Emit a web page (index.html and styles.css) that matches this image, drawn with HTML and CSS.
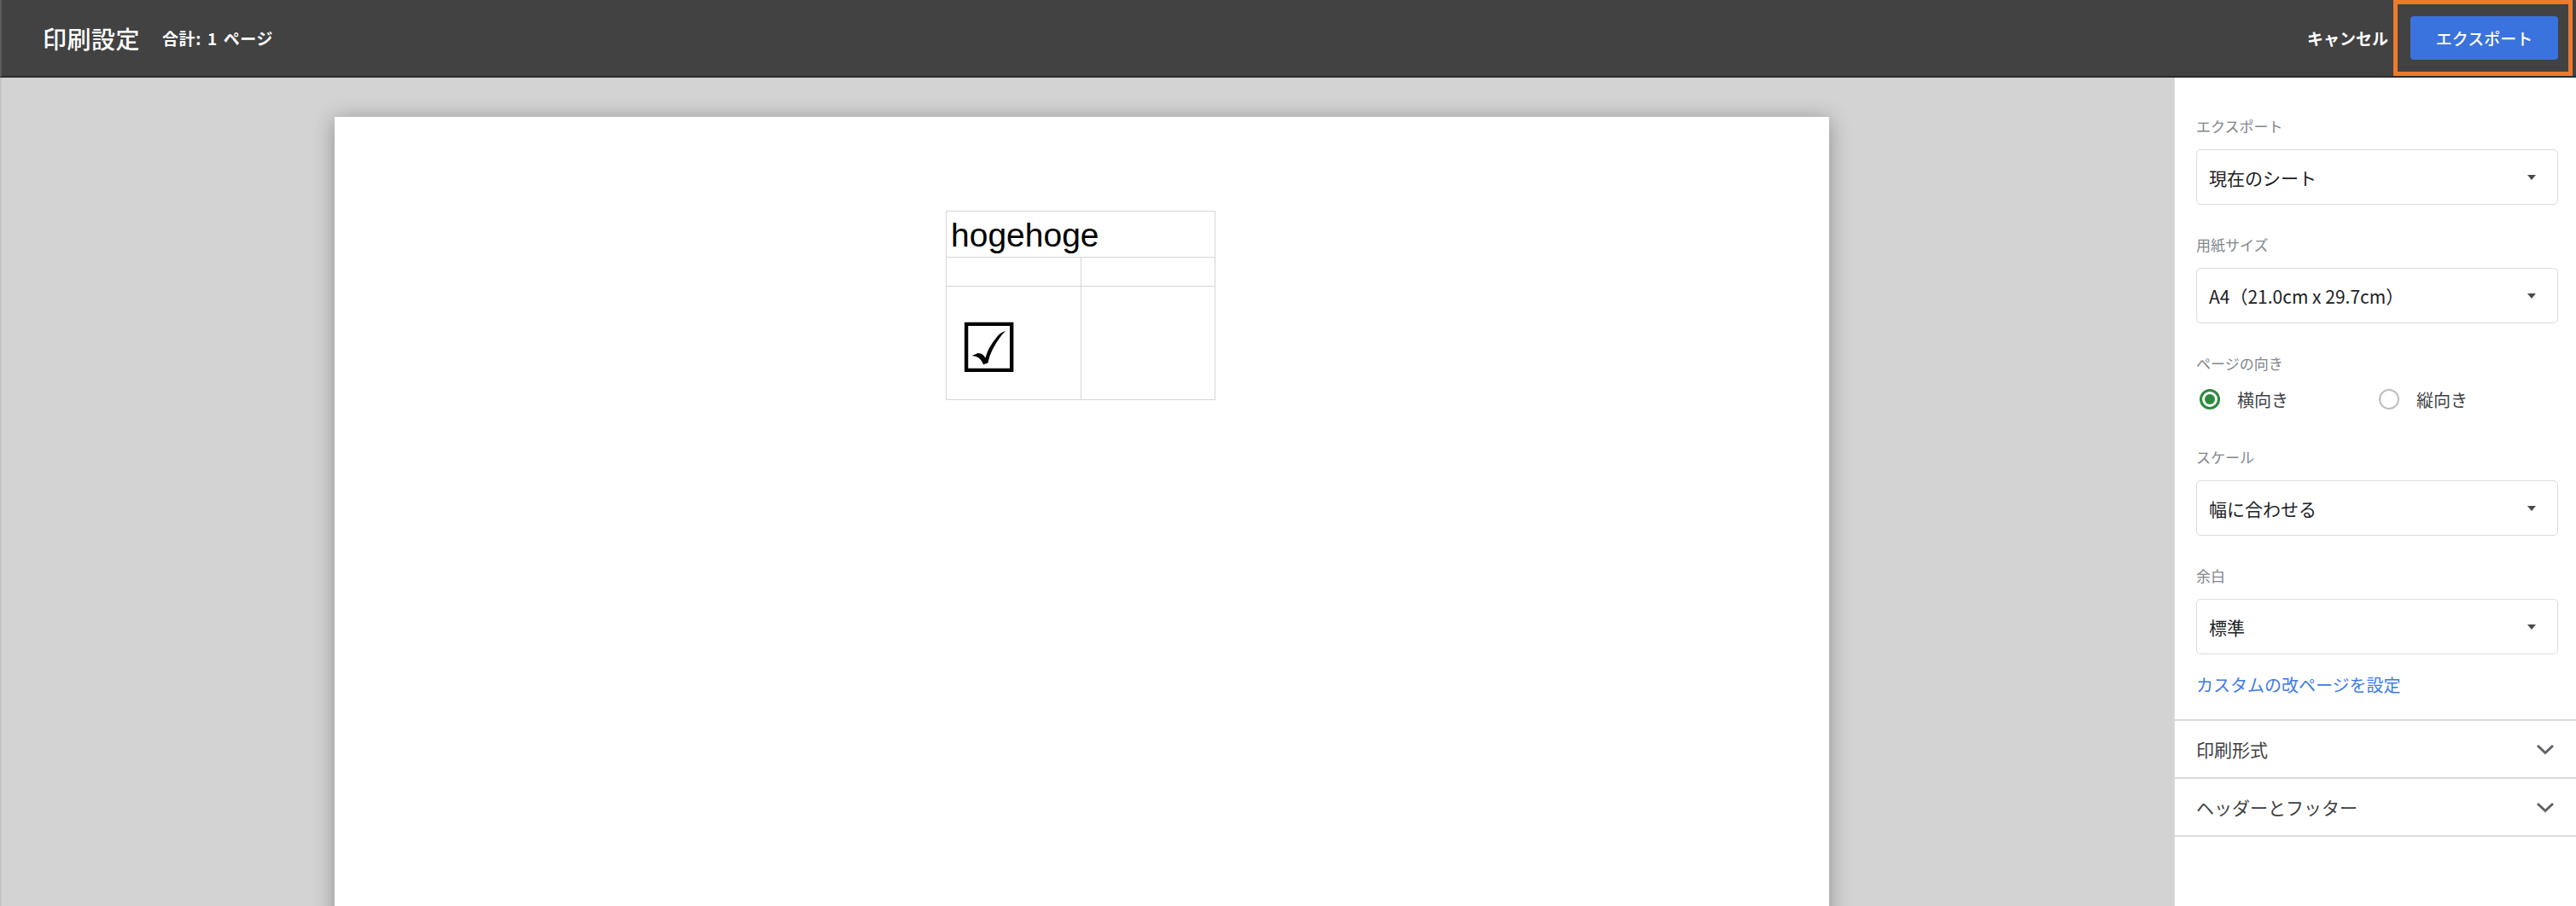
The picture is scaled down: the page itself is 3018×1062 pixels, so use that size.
FILE: index.html
```html
<!DOCTYPE html>
<html lang="ja">
<head>
<meta charset="utf-8">
<title>印刷設定</title>
<link rel="stylesheet" href="styles.css">
</head>
<body>
<div class="app">
  <header class="topbar">
    <div class="title">印刷設定</div>
    <div class="total">合計: 1 ページ</div>
    <div class="spacer"></div>
    <div class="cancel">キャンセル</div>
    <div class="export-btn">エクスポート</div>
    <div class="highlight"></div>
  </header>
  <div class="main">
    <div class="preview">
      <div class="sheet">
        <table class="grid">
          <tr class="r1"><td colspan="2" class="hoge">hogehoge</td></tr>
          <tr class="r2"><td class="c1"></td><td class="c2"></td></tr>
          <tr class="r3"><td class="c1 check">☑</td><td class="c2"></td></tr>
        </table>
      </div>
    </div>
    <aside class="sidebar">
      <div class="settings">
        <div class="label">エクスポート</div>
        <div class="select"><span>現在のシート</span><span class="caret"></span></div>
        <div class="label gap">用紙サイズ</div>
        <div class="select"><span>A4（21.0cm x 29.7cm）</span><span class="caret"></span></div>
        <div class="label gap">ページの向き</div>
        <div class="radios">
          <div class="radio-opt"><span class="radio on"></span><span>横向き</span></div>
          <div class="radio-opt"><span class="radio"></span><span>縦向き</span></div>
        </div>
        <div class="label gap-lg">スケール</div>
        <div class="select"><span>幅に合わせる</span><span class="caret"></span></div>
        <div class="label gap">余白</div>
        <div class="select"><span>標準</span><span class="caret"></span></div>
        <div class="link">カスタムの改ページを設定</div>
      </div>
      <div class="acc"><span>印刷形式</span><svg class="chev" width="22" height="13" viewBox="0 0 22 13"><path d="M2 2 L11 10.5 L20 2" fill="none" stroke="#5f6368" stroke-width="3"/></svg></div>
      <div class="acc"><span>ヘッダーとフッター</span><svg class="chev" width="22" height="13" viewBox="0 0 22 13"><path d="M2 2 L11 10.5 L20 2" fill="none" stroke="#5f6368" stroke-width="3"/></svg></div>
    </aside>
  </div>
</div>
</body>
</html>
```

FILE: styles.css
```css
* { box-sizing: border-box; }
html, body {
  margin: 0;
  padding: 0;
  width: 3018px;
  height: 1062px;
  overflow: hidden;
  font-family: "Noto Sans CJK JP", "Noto Sans", sans-serif;
}
.app {
  display: flex;
  flex-direction: column;
  height: 1062px;
}
.topbar {
  position: relative;
  height: 91px;
  flex: none;
  background: #424242;
  border-left: 2px solid #5c5c5c;
  border-bottom: 2px solid #2c2c2c;
  display: flex;
  align-items: center;
  padding-left: 48px;
  padding-right: 21px;
  color: #fff;
}
.title {
  font-size: 28px;
  font-weight: 500;
  letter-spacing: 0.5px;
}
.total {
  margin-left: 26px;
  font-size: 19px;
  font-weight: 700;
  letter-spacing: 0.6px;
  word-spacing: 2px;
}
.spacer { flex: 1; }
.cancel {
  font-size: 19px;
  font-weight: 700;
}
.export-btn {
  margin-left: 26px;
  width: 173px;
  height: 51px;
  background: #3b73de;
  border-radius: 4px;
  display: flex;
  align-items: center;
  justify-content: center;
  font-size: 19px;
  font-weight: 500;
}
.highlight {
  position: absolute;
  right: 4px;
  top: 0;
  width: 210px;
  height: 89px;
  border: 5px solid #ee7a2c;
}
.main {
  flex: 1;
  display: flex;
  min-height: 0;
}
.preview {
  flex: 1;
  background: #d3d3d3;
  border-left: 2px solid #c4c4c4;
  overflow: hidden;
  padding: 46px 0 0 390px;
}
.sheet {
  width: 1751px;
  height: 1200px;
  background: #fff;
  box-shadow: 0 3px 24px rgba(0, 0, 0, 0.32);
  padding: 110px 0 0 716px;
}
.grid {
  border-collapse: collapse;
  font-family: "Liberation Sans", Arial, sans-serif;
  table-layout: fixed;
  width: 316px;
}
.grid td {
  border: 1px solid #d6d6d6;
  padding: 0;
}
.r1 td { height: 54px; }
.r2 td { height: 34px; }
.r3 td { height: 133px; }
.c1 { width: 159px; }
.c2 { width: 157px; }
.hoge {
  font-size: 39px;
  line-height: 50px;
  padding: 3px 0 0 5px !important;
  color: #000;
}
.check {
  font-family: "DejaVu Sans", sans-serif;
  font-size: 80px;
  font-weight: 700;
  line-height: 1;
  vertical-align: middle;
  padding: 14px 0 0 14px !important;
  color: #000;
}
.sidebar {
  width: 471px;
  flex: none;
  background: #fff;
  border-left: 1px solid #dcdcdc;
}
.settings {
  padding: 47px 21px 28px 25px;
  border-bottom: 2px solid #dadada;
}
.label {
  font-size: 17px;
  line-height: 20px;
  color: #80868b;
  margin-bottom: 17px;
}
.label.gap { margin-top: 37px; }
.label.gap-lg { margin-top: 43px; }
.select {
  height: 65px;
  border: 1px solid #dadce0;
  border-radius: 5px;
  display: flex;
  align-items: center;
  justify-content: space-between;
  padding: 0 25px 0 14px;
  font-size: 21px;
  color: #202124;
}
.caret {
  width: 0;
  height: 0;
  border-left: 5.5px solid transparent;
  border-right: 5.5px solid transparent;
  border-top: 6px solid #4a4a4a;
}
.radios {
  display: flex;
  height: 30px;
  align-items: center;
  padding-left: 4px;
}
.radio-opt {
  width: 211px;
  display: flex;
  align-items: center;
  gap: 20px;
  font-size: 20px;
  color: #3c4043;
}
.radio {
  width: 24px;
  height: 24px;
  border-radius: 50%;
  border: 2px solid #bdbdbd;
  display: flex;
  align-items: center;
  justify-content: center;
}
.radio.on {
  border: 3px solid #2b8a3e;
}
.radio.on::after {
  content: "";
  width: 12px;
  height: 12px;
  border-radius: 50%;
  background: #2b8a3e;
}
.link {
  margin-top: 24px;
  font-size: 20px;
  line-height: 24px;
  color: #3d7be6;
}
.acc {
  height: 68px;
  border-bottom: 2px solid #dadada;
  display: flex;
  align-items: center;
  justify-content: space-between;
  padding: 0 25px 0 25px;
  font-size: 21px;
  color: #3c4043;
}
.chev { display: block; }
```
